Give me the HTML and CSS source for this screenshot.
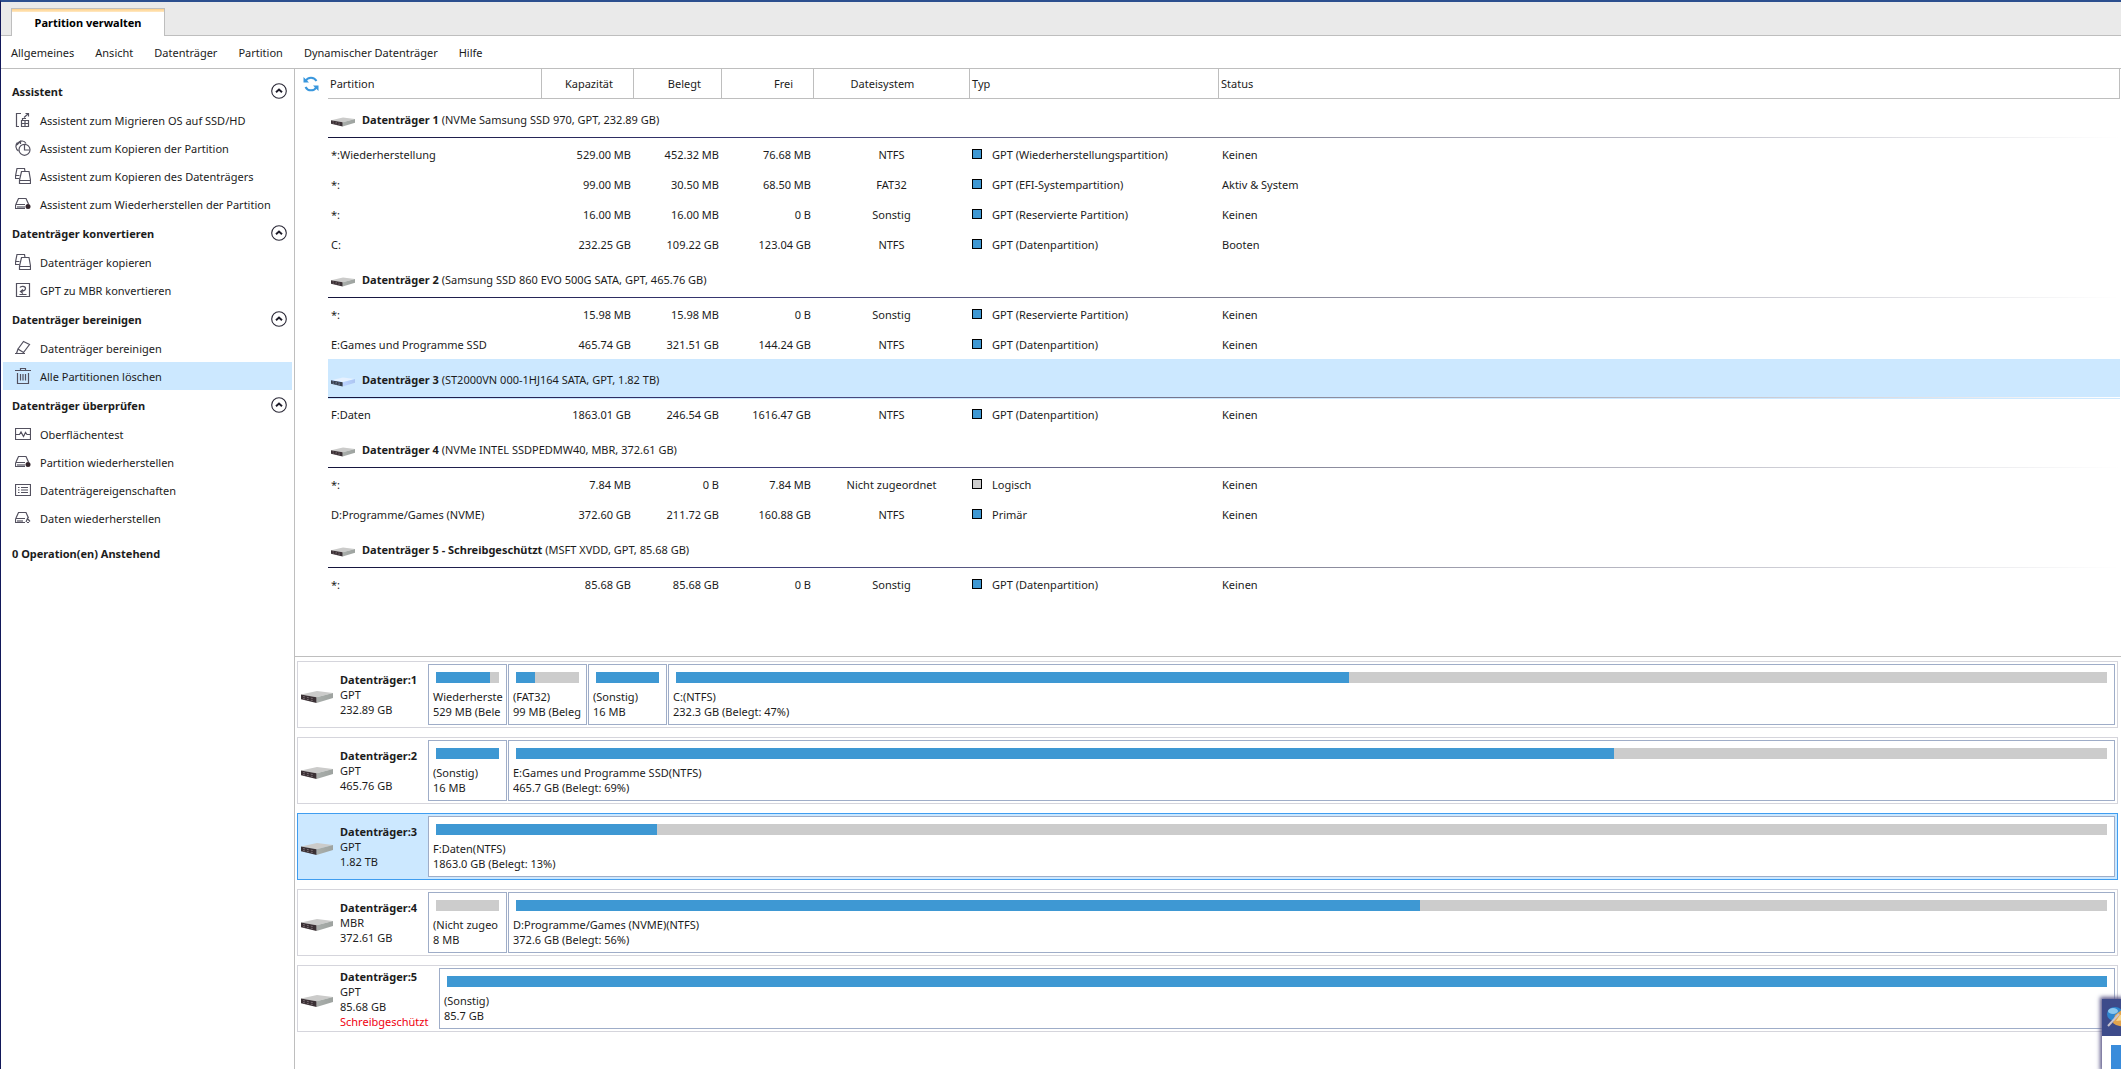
FILE: index.html
```html
<!DOCTYPE html>
<html lang="de">
<head>
<meta charset="utf-8">
<meta name="viewport" content="width=device-width, initial-scale=1">
<title>Partition verwalten</title>
<link rel="stylesheet" href="styles.css">
</head>
<body>
<svg class="defs" aria-hidden="true">
  <defs>
    <linearGradient id="steel" x1="0" x2="1"><stop offset="0" stop-color="#a9aeab"/><stop offset="1" stop-color="#9ea3a0"/></linearGradient>
    <symbol id="disk" viewBox="0 0 32 14">
      <path d="M0 4.500 16 1 32 3 15.500 7.300Z" fill="#cbcbca"/>
      <path d="M15.500 7.300 32 3V8L15.500 13Z" fill="url(#steel)"/>
      <path d="M0 4.500 15.500 7.300V13L0 9.300Z" fill="#3a3034"/>
      <path d="M2 6.500 13.500 9M2 8.500 13.500 11" stroke="#75696f" stroke-width="1" stroke-dasharray="2 2" fill="none"/>
    </symbol>
    <symbol id="up" viewBox="0 0 16 16">
      <circle cx="8" cy="8" r="7.300" fill="none" stroke="#2a2836" stroke-width="1.100"/>
      <path d="M5 9.300 8 6.500 11 9.300" fill="none" stroke="#1d1b28" stroke-width="1.900"/>
    </symbol>
    <symbol id="migrate" viewBox="0 0 16 16">
      <path d="M6 1.500H1.500V14.500H4M9 5.500 13.500 1.500M10.500 1.500H13.500V4.500M6.500 8.500H13.500V14.500H6.500ZM6.500 11.500H13.500M10 8.500V14.500M7.500 8.500V6.500H11"/>
    </symbol>
    <symbol id="copypart" viewBox="0 0 16 16">
      <path d="M3.500 11A5.500 5.500 0 0 1 2.500 2.500M2.500 5A4.500 4.500 0 0 1 11 3.500M1 5.500 6 1M5.500 1V4"/>
      <circle cx="9.500" cy="9.800" r="5.500"/><path d="M9.500 5V10H14.500"/>
    </symbol>
    <symbol id="copydisk" viewBox="0 0 16 16">
      <path d="M4.500 10.500H.5V8L2 .5H9.500L10 3.500M.5 7.500H4.500"/>
      <path d="M6.500 3.500H14L15.500 12V15.500H4.500V12ZM4.500 12.500H15.500"/>
    </symbol>
    <symbol id="restore" viewBox="0 0 16 16">
      <path d="M1 8 3.500 2.500H11L13.500 8M.5 8.500H10M.5 8.500V12.500H10M3 10V12M5 10V12M7 10V12M9 10V12"/>
      <circle cx="13" cy="10.500" r="2.500" class="solid"/>
    </symbol>
    <symbol id="convert" viewBox="0 0 16 16">
      <path d="M1.500 1.500H14.500V14.500H1.500ZM5 5.500C5.500 4 10.500 3.500 10.500 6.500 10.500 9 7.500 9 6.500 9.500M8 7.500 5.500 9.500 8 11.500M4.500 12.500H11.500"/>
    </symbol>
    <symbol id="eraser" viewBox="0 0 16 16">
      <path d="M8.500 1.500 14.500 4.500 8.500 12.500 3 9ZM3 9 1.500 13.500H7.500L8.500 12.500M0 13.500H10"/>
    </symbol>
    <symbol id="trash" viewBox="0 0 16 16">
      <path d="M0 2.500H16M5.500 2V.5H10.500V2M2.500 5V15.500H13.500V5M5.500 6V12.500M8 6V12.500M10.500 6V12.500"/>
    </symbol>
    <symbol id="surface" viewBox="0 0 16 16">
      <path d="M.5 2.500H15.500V13.500H.5ZM1 8.500H4.500L6 6 8.500 10.500 10.500 6.500 12 8.500H15"/>
    </symbol>
    <symbol id="props" viewBox="0 0 16 16">
      <path d="M.5 2.500H15.500V13.500H.5ZM3 5.500H4.500M6 5.500H13M3 8H4.500M6 8H13M3 10.500H4.500M6 10.500H13"/>
    </symbol>
    <symbol id="recover" viewBox="0 0 16 16">
      <path d="M1 8 3.500 2.500H11L13.500 8M.5 8.500H10M.5 8.500V12.500H10M3 10V12M5 10V12M7 10V12M11 12 12.500 8.500 15 11.500M12 12.500H14"/>
    </symbol>
  </defs>
</svg>

<div class="app">
  <header class="tabs"><button class="tab" type="button">Partition verwalten</button></header>
  <nav class="menu">
    <a href="#">Allgemeines</a><a href="#">Ansicht</a><a href="#">Datenträger</a><a href="#">Partition</a><a href="#">Dynamischer Datenträger</a><a href="#">Hilfe</a>
  </nav>

  <div class="body">
    <aside class="side">
      <section>
        <h2><button type="button">Assistent<svg><use href="#up"/></svg></button></h2>
        <a href="#"><svg><use href="#migrate"/></svg>Assistent zum Migrieren OS auf SSD/HD</a>
        <a href="#"><svg><use href="#copypart"/></svg>Assistent zum Kopieren der Partition</a>
        <a href="#"><svg><use href="#copydisk"/></svg>Assistent zum Kopieren des Datenträgers</a>
        <a href="#"><svg><use href="#restore"/></svg>Assistent zum Wiederherstellen der Partition</a>
      </section>
      <section>
        <h2><button type="button">Datenträger konvertieren<svg><use href="#up"/></svg></button></h2>
        <a href="#"><svg><use href="#copydisk"/></svg>Datenträger kopieren</a>
        <a href="#"><svg><use href="#convert"/></svg>GPT zu MBR konvertieren</a>
      </section>
      <section>
        <h2><button type="button">Datenträger bereinigen<svg><use href="#up"/></svg></button></h2>
        <a href="#"><svg><use href="#eraser"/></svg>Datenträger bereinigen</a>
        <a href="#" class="active"><svg><use href="#trash"/></svg>Alle Partitionen löschen</a>
      </section>
      <section>
        <h2><button type="button">Datenträger überprüfen<svg><use href="#up"/></svg></button></h2>
        <a href="#"><svg><use href="#surface"/></svg>Oberflächentest</a>
        <a href="#"><svg><use href="#restore"/></svg>Partition wiederherstellen</a>
        <a href="#"><svg><use href="#props"/></svg>Datenträgereigenschaften</a>
        <a href="#"><svg><use href="#recover"/></svg>Daten wiederherstellen</a>
      </section>
      <p class="pending">0 Operation(en) Anstehend</p>
    </aside>

    <main class="main">
      <div class="list">
        <button class="refresh" type="button" aria-label="Aktualisieren">
          <svg viewBox="0 0 16 16"><path d="M2.500 5A6.200 6.200 0 0 1 13.500 5M13.500 11A6.200 6.200 0 0 1 2.500 11" fill="none" stroke="#3a97dd" stroke-width="2"/><path d="M.5 1V6.500H6ZM15.500 15V9.500H10Z" fill="#3a97dd"/></svg>
        </button>
        <table>
          <colgroup><col class="c-name"><col class="c-cap"><col class="c-used"><col class="c-free"><col class="c-fs"><col class="c-type"><col></colgroup>
          <thead><tr><th>Partition</th><th class="num">Kapazität</th><th class="num">Belegt</th><th class="num">Frei</th><th class="fs">Dateisystem</th><th>Typ</th><th>Status</th></tr></thead>
          <tbody>
            <tr class="group"><th colspan="7"><svg class="disk"><use href="#disk"/></svg><b>Datenträger 1</b> (NVMe Samsung SSD 970, GPT, 232.89 GB)</th></tr>
            <tr><td>*:Wiederherstellung</td><td class="num">529.00 MB</td><td class="num">452.32 MB</td><td class="num">76.68 MB</td><td class="fs">NTFS</td><td><i class="sw"></i>GPT (Wiederherstellungspartition)</td><td>Keinen</td></tr>
            <tr><td>*:</td><td class="num">99.00 MB</td><td class="num">30.50 MB</td><td class="num">68.50 MB</td><td class="fs">FAT32</td><td><i class="sw"></i>GPT (EFI-Systempartition)</td><td>Aktiv &amp; System</td></tr>
            <tr><td>*:</td><td class="num">16.00 MB</td><td class="num">16.00 MB</td><td class="num">0 B</td><td class="fs">Sonstig</td><td><i class="sw"></i>GPT (Reservierte Partition)</td><td>Keinen</td></tr>
            <tr><td>C:</td><td class="num">232.25 GB</td><td class="num">109.22 GB</td><td class="num">123.04 GB</td><td class="fs">NTFS</td><td><i class="sw"></i>GPT (Datenpartition)</td><td>Booten</td></tr>
          </tbody>
          <tbody>
            <tr class="group"><th colspan="7"><svg class="disk"><use href="#disk"/></svg><b>Datenträger 2</b> (Samsung SSD 860 EVO 500G SATA, GPT, 465.76 GB)</th></tr>
            <tr><td>*:</td><td class="num">15.98 MB</td><td class="num">15.98 MB</td><td class="num">0 B</td><td class="fs">Sonstig</td><td><i class="sw"></i>GPT (Reservierte Partition)</td><td>Keinen</td></tr>
            <tr><td>E:Games und Programme SSD</td><td class="num">465.74 GB</td><td class="num">321.51 GB</td><td class="num">144.24 GB</td><td class="fs">NTFS</td><td><i class="sw"></i>GPT (Datenpartition)</td><td>Keinen</td></tr>
          </tbody>
          <tbody>
            <tr class="group selected"><th colspan="7"><svg class="disk"><use href="#disk"/></svg><b>Datenträger 3</b> (ST2000VN 000-1HJ164 SATA, GPT, 1.82 TB)</th></tr>
            <tr><td>F:Daten</td><td class="num">1863.01 GB</td><td class="num">246.54 GB</td><td class="num">1616.47 GB</td><td class="fs">NTFS</td><td><i class="sw"></i>GPT (Datenpartition)</td><td>Keinen</td></tr>
          </tbody>
          <tbody>
            <tr class="group"><th colspan="7"><svg class="disk"><use href="#disk"/></svg><b>Datenträger 4</b> (NVMe INTEL SSDPEDMW40, MBR, 372.61 GB)</th></tr>
            <tr><td>*:</td><td class="num">7.84 MB</td><td class="num">0 B</td><td class="num">7.84 MB</td><td class="fs">Nicht zugeordnet</td><td><i class="sw free"></i>Logisch</td><td>Keinen</td></tr>
            <tr><td>D:Programme/Games (NVME)</td><td class="num">372.60 GB</td><td class="num">211.72 GB</td><td class="num">160.88 GB</td><td class="fs">NTFS</td><td><i class="sw"></i>Primär</td><td>Keinen</td></tr>
          </tbody>
          <tbody>
            <tr class="group"><th colspan="7"><svg class="disk"><use href="#disk"/></svg><b>Datenträger 5 - Schreibgeschützt</b> (MSFT XVDD, GPT, 85.68 GB)</th></tr>
            <tr><td>*:</td><td class="num">85.68 GB</td><td class="num">85.68 GB</td><td class="num">0 B</td><td class="fs">Sonstig</td><td><i class="sw"></i>GPT (Datenpartition)</td><td>Keinen</td></tr>
          </tbody>
        </table>
      </div>

      <div class="disks">
        <article class="unit">
          <svg class="drive"><use href="#disk"/></svg>
          <div class="info"><b>Datenträger:1</b><span>GPT</span><span>232.89 GB</span></div>
          <div class="parts">
            <div class="part small"><div class="bar"><i style="width:86%"></i></div><span>Wiederherste</span><span>529 MB (Bele</span></div>
            <div class="part small"><div class="bar"><i style="width:30%"></i></div><span>(FAT32)</span><span>99 MB (Beleg</span></div>
            <div class="part small"><div class="bar"><i style="width:100%"></i></div><span>(Sonstig)</span><span>16 MB</span></div>
            <div class="part"><div class="bar"><i style="width:47%"></i></div><span>C:(NTFS)</span><span>232.3 GB (Belegt: 47%)</span></div>
          </div>
        </article>
        <article class="unit">
          <svg class="drive"><use href="#disk"/></svg>
          <div class="info"><b>Datenträger:2</b><span>GPT</span><span>465.76 GB</span></div>
          <div class="parts">
            <div class="part small"><div class="bar"><i style="width:100%"></i></div><span>(Sonstig)</span><span>16 MB</span></div>
            <div class="part"><div class="bar"><i style="width:69%"></i></div><span>E:Games und Programme SSD(NTFS)</span><span>465.7 GB (Belegt: 69%)</span></div>
          </div>
        </article>
        <article class="unit selected">
          <svg class="drive"><use href="#disk"/></svg>
          <div class="info"><b>Datenträger:3</b><span>GPT</span><span>1.82 TB</span></div>
          <div class="parts">
            <div class="part"><div class="bar"><i style="width:13.2%"></i></div><span>F:Daten(NTFS)</span><span>1863.0 GB (Belegt: 13%)</span></div>
          </div>
        </article>
        <article class="unit">
          <svg class="drive"><use href="#disk"/></svg>
          <div class="info"><b>Datenträger:4</b><span>MBR</span><span>372.61 GB</span></div>
          <div class="parts">
            <div class="part small"><div class="bar"></div><span>(Nicht zugeo</span><span>8 MB</span></div>
            <div class="part"><div class="bar"><i style="width:56.8%"></i></div><span>D:Programme/Games (NVME)(NTFS)</span><span>372.6 GB (Belegt: 56%)</span></div>
          </div>
        </article>
        <article class="unit locked">
          <svg class="drive"><use href="#disk"/></svg>
          <div class="info"><b>Datenträger:5</b><span>GPT</span><span>85.68 GB</span><span class="warn">Schreibgeschützt</span></div>
          <div class="parts">
            <div class="part"><div class="bar"><i style="width:100%"></i></div><span>(Sonstig)</span><span>85.7 GB</span></div>
          </div>
        </article>
      </div>
    </main>
  </div>
</div>

<div class="popup">
  <div class="popup-title">
    <svg viewBox="0 0 20 22"><ellipse cx="9" cy="8" rx="8" ry="7" fill="#2f86cf"/><ellipse cx="7" cy="5" rx="5" ry="3" fill="#8cc8ee"/><path d="M7 17 9 9 17 3 20 3V19Q12 22 7 17Z" fill="#e3a44c"/><path d="M10 15 14 9 20 7V14Z" fill="#f7d892"/><path d="M2 20 13 8" stroke="#c9c4cf" stroke-width="2"/></svg>
  </div>
  <div class="popup-body"></div>
</div>
</body>
</html>
```
FILE: styles.css
```css
* { box-sizing: border-box; }

body {
  margin: 0;
  background: #fff;
  color: #1c1c1c;
  font: 11px/15px "Noto Sans", "Open Sans", sans-serif;
}

a { color: inherit; text-decoration: none; }
button { font: inherit; color: inherit; border: 0; background: none; padding: 0; text-align: left; }
.defs { position: absolute; width: 0; height: 0; }

.app {
  display: flex;
  flex-direction: column;
  min-height: 100vh;
  border-left: 1px solid #12185a;
  border-top: 2px solid #2c4f8f;
}

/* Tab strip and menu */
.tabs {
  display: flex;
  align-items: flex-end;
  height: 34px;
  padding-left: 10px;
  background: #eaeaea;
  border-bottom: 1px solid #bebebe;
}
.tab {
  width: 154px;
  height: 28px;
  margin-bottom: -1px;
  border: 1px solid #bebebe;
  border-bottom: 0;
  background: linear-gradient(#ffd085, #ffe9c6 3px, #fff 3px);
  font-weight: 700;
  text-align: center;
  color: #000;
}
.menu {
  display: flex;
  align-items: center;
  gap: 21px;
  height: 33px;
  padding-left: 10px;
  border-bottom: 1px solid #bebebe;
}

.body { display: flex; flex: 1; }

/* Task sidebar */
.side {
  flex: none;
  width: 294px;
  padding: 7px 2px 0;
  border-right: 1px solid #bebebe;
}
.side h2 { margin: 0; font-size: 11px; }
.side h2 button {
  display: flex;
  align-items: center;
  justify-content: space-between;
  width: 100%;
  height: 30px;
  padding: 0 5px 0 9px;
  font-weight: 700;
}
.side svg { width: 16px; height: 16px; flex: none; }
.side a {
  display: flex;
  align-items: center;
  gap: 9px;
  height: 28px;
  padding-left: 12px;
}
.side a svg { fill: none; stroke: #53515f; stroke-width: 1.2; }
.solid { fill: #33252c; stroke: none; }
.side .active { background: #cce8ff; }
.pending { margin: 14px 0 0 9px; font-weight: 700; }

.main { flex: 1; min-width: 0; display: flex; flex-direction: column; }

/* Partition list */
.list { display: flex; align-items: flex-start; flex: 1; padding-right: 1px; }
.refresh { flex: none; width: 33px; padding: 7px 0 0 8px; }
.refresh svg { display: block; width: 16px; height: 16px; }
table { flex: 1; width: 100%; border-collapse: separate; border-spacing: 0; table-layout: fixed; }
.c-name { width: 214px; }
.c-cap, .c-free { width: 92px; }
.c-used { width: 88px; }
.c-fs { width: 156px; }
.c-type { width: 249px; }
th, td { padding: 0 2px; font-weight: 400; text-align: left; white-space: nowrap; }
thead th { height: 30px; border-right: 1px solid #bebebe; border-bottom: 1px solid #bebebe; }
td { height: 30px; }
td:first-child { padding-left: 3px; }
td:last-child { padding-left: 3px; }
.num { text-align: right; }
td.num { padding-right: 3px; }
thead .num { padding-right: 20px; }
.fs { text-align: center; }
thead .fs { padding-right: 20px; }
td.fs { padding-right: 3px; }
.group th {
  height: 40px;
  padding: 2px 0 0 3px;
  background: linear-gradient(90deg, #14143c, #3c3c78 25%, #7c7c90 50%, #fff) 0 38px / 100% 1px no-repeat;
}
.group.selected th { background-color: #cce8ff; }
.disk { width: 24px; height: 12px; margin-right: 7px; vertical-align: middle; }
.group.selected .disk { filter: sepia(1) hue-rotate(180deg); }
.sw {
  display: inline-block;
  width: 10px;
  height: 10px;
  margin-right: 10px;
  border: 1px solid #000;
  background: #3e98d3;
}
.sw.free { background: #ccc; }

/* Disk map */
.disks {
  display: flex;
  flex-direction: column;
  gap: 9px;
  padding: 4px 3px 37px 2px;
  border-top: 1px solid #bebebe;
}
.unit {
  display: flex;
  align-items: center;
  height: 67px;
  padding: 2px;
  border: 1px solid #d5d5dc;
}
.unit.selected { border-color: #3f9df0; background: #cce8ff; }
.drive { flex: none; width: 32px; height: 14px; margin: 4px 7px 0 1px; }
.info { flex: none; display: flex; flex-direction: column; width: 88px; }
.locked .info { width: 99px; }
.warn { color: #f00010; }
.parts { flex: 1; min-width: 0; display: flex; gap: 1px; }
.part {
  flex: 1;
  min-width: 0;
  display: flex;
  flex-direction: column;
  height: 61px;
  padding: 7px 4px 0;
  border: 1px solid #9fadc8;
  background: #fff;
  white-space: nowrap;
}
.part.small { flex: 0 0 79px; }
.bar { height: 11px; margin: 0 3px 6px; background: #ccc; }
.bar i { display: block; height: 100%; background: #3e98d3; }

/* Notification sliding in at the screen corner */
.popup {
  position: fixed;
  right: 0;
  bottom: 0;
  width: 19px;
  height: 70px;
  background: #fff;
  box-shadow: 0 0 4px 2px #5d5a8a;
}
.popup-title { height: 37px; padding-top: 7px; background: #3d4b8a; overflow: hidden; }
.popup-title svg { display: block; width: 20px; height: 22px; margin-left: 4px; }
.popup-body { height: 24px; margin: 9px 0 0 9px; background: #3a8cdb; }
```
